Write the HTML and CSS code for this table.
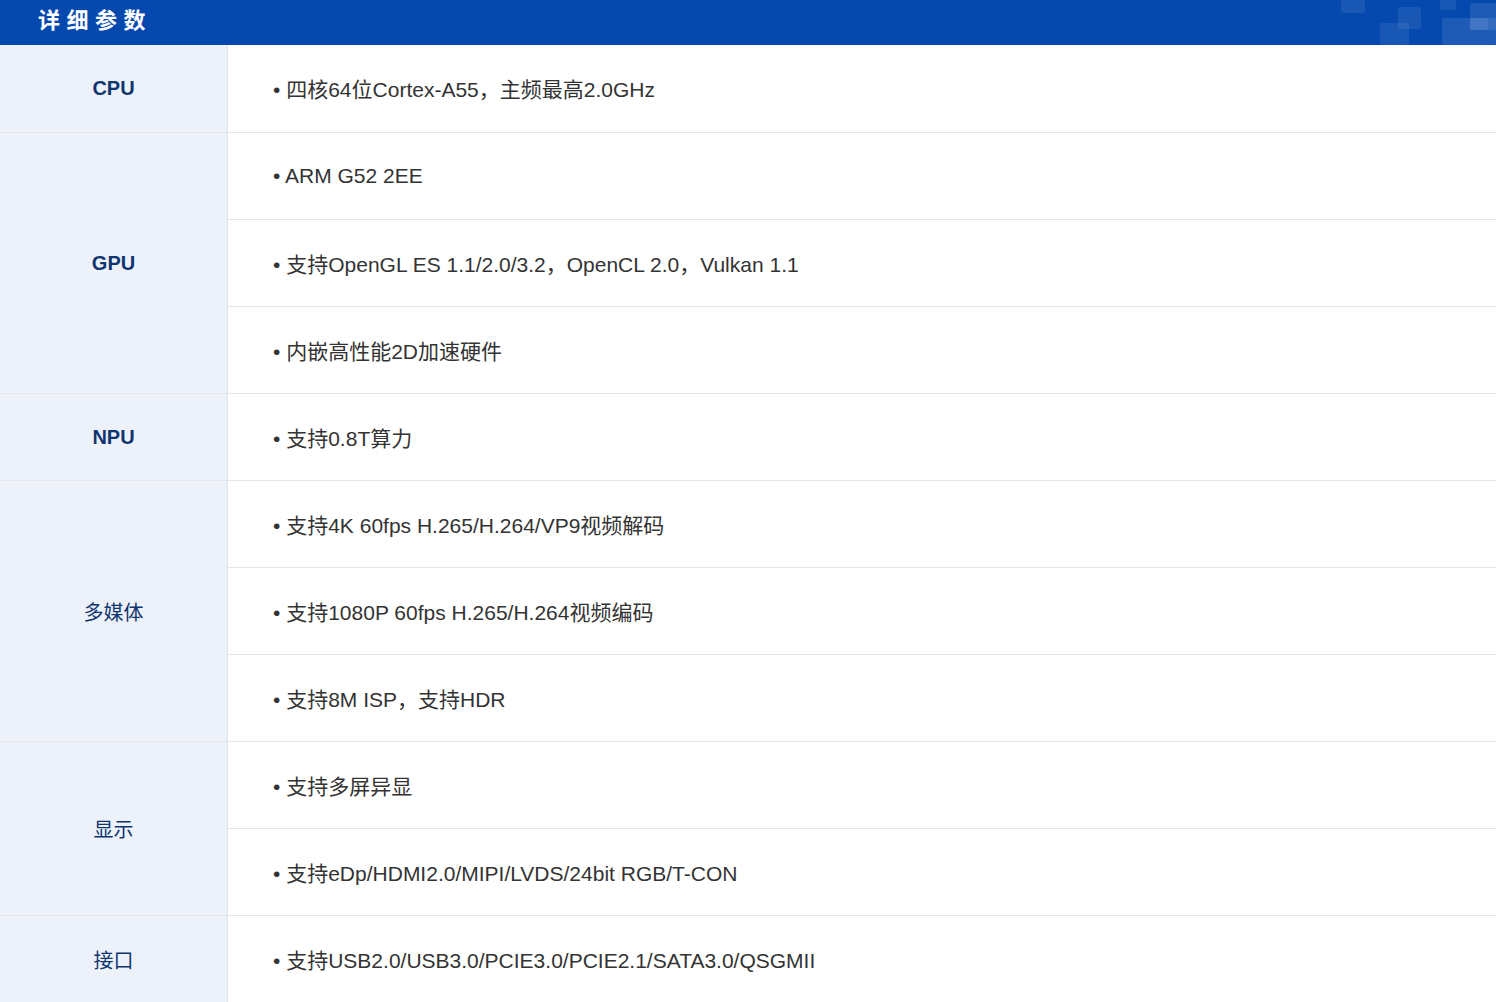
FILE: index.html
```html
<!DOCTYPE html>
<html lang="zh-CN">
<head>
<meta charset="utf-8">
<title>详细参数</title>
<link rel="stylesheet" href="styles.css">
</head>
<body>
<div class="page">
  <div class="header">
    <h2 class="title">详细参数</h2>
    <div class="deco">
      <span class="sq s1"></span><span class="sq s2"></span><span class="sq s3"></span>
      <span class="sq s4"></span><span class="sq s5"></span><span class="sq s6"></span>
      <span class="sq s7"></span>
    </div>
  </div>
  <div class="table">
    <div class="group first">
      <div class="label latin">CPU</div>
      <div class="items"><div class="item">• 四核64位Cortex-A55，主频最高2.0GHz</div></div>
    </div>
    <div class="group">
      <div class="label latin">GPU</div>
      <div class="items">
        <div class="item">• ARM G52 2EE</div>
        <div class="item">• 支持OpenGL ES 1.1/2.0/3.2，OpenCL 2.0，Vulkan 1.1</div>
        <div class="item">• 内嵌高性能2D加速硬件</div>
      </div>
    </div>
    <div class="group">
      <div class="label latin">NPU</div>
      <div class="items"><div class="item">• 支持0.8T算力</div></div>
    </div>
    <div class="group">
      <div class="label">多媒体</div>
      <div class="items">
        <div class="item">• 支持4K 60fps H.265/H.264/VP9视频解码</div>
        <div class="item">• 支持1080P 60fps H.265/H.264视频编码</div>
        <div class="item">• 支持8M ISP，支持HDR</div>
      </div>
    </div>
    <div class="group">
      <div class="label">显示</div>
      <div class="items">
        <div class="item">• 支持多屏异显</div>
        <div class="item">• 支持eDp/HDMI2.0/MIPI/LVDS/24bit RGB/T-CON</div>
      </div>
    </div>
    <div class="group last">
      <div class="label">接口</div>
      <div class="items"><div class="item">• 支持USB2.0/USB3.0/PCIE3.0/PCIE2.1/SATA3.0/QSGMII</div></div>
    </div>
  </div>
</div>
</body>
</html>
```
FILE: styles.css
```css
html, body {
  margin: 0;
  padding: 0;
  background: #ffffff;
}
body {
  font-family: "Liberation Sans", Arial, "Noto Sans CJK SC", sans-serif;
  width: 1496px;
  height: 1002px;
  overflow: hidden;
}
.page {
  width: 1496px;
}
.header {
  position: relative;
  height: 45px;
  background: #0549ae;
  display: flex;
  align-items: flex-start;
  overflow: hidden;
}
.title {
  margin: 0 0 0 38px;
  color: #ffffff;
  font-family: "Noto Sans CJK SC", sans-serif;
  font-size: 22px;
  font-weight: 700;
  letter-spacing: 6.5px;
  line-height: 37px;
}
.deco {
  position: absolute;
  right: 0;
  top: 0;
  width: 200px;
  height: 45px;
}
.sq {
  position: absolute;
  background: rgba(255, 255, 255, 0.08);
  border-radius: 2px;
}
.s1 { left: 45px; top: 0; width: 24px; height: 13px; }
.s2 { left: 102px; top: 7px; width: 23px; height: 22px; }
.s3 { left: 84px; top: 23px; width: 29px; height: 22px; }
.s4 { left: 144px; top: 0; width: 16px; height: 10px; }
.s5 { left: 146px; top: 18px; width: 54px; height: 27px; background: rgba(255,255,255,0.10); }
.s6 { left: 174px; top: 3px; width: 26px; height: 27px; background: rgba(255,255,255,0.10); }
.s7 { left: 174px; top: 18px; width: 18px; height: 12px; background: rgba(255,255,255,0.08); }

.table {
  display: flex;
  flex-direction: column;
}
.group {
  display: flex;
  border-bottom: 1px solid #e4e6ea;
}
.group.last {
  border-bottom: none;
}
.label {
  width: 227px;
  flex: 0 0 227px;
  background: #edf2fa;
  border-right: 1px solid #e2e5ea;
  display: flex;
  align-items: center;
  justify-content: center;
  color: #10356f;
  font-family: "Noto Sans CJK SC", sans-serif;
  font-size: 20px;
}
.label.latin {
  font-family: "Liberation Sans", Arial, sans-serif;
  font-weight: 700;
}
.items {
  flex: 1;
  display: flex;
  flex-direction: column;
}
.item {
  height: 86px;
  display: flex;
  align-items: center;
  padding-left: 45px;
  color: #333333;
  font-size: 21px;
  border-bottom: 1px solid #e4e6ea;
}
.item:last-child {
  border-bottom: none;
}
.group.first .item,
.group.last .item {
  height: 87px;
  padding-bottom: 2px;
  box-sizing: border-box;
}
```
